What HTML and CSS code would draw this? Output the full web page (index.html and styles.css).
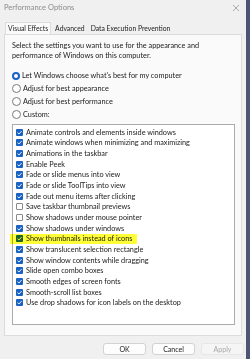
FILE: index.html
```html
<!DOCTYPE html>
<html lang="en">
<head>
    <meta charset="UTF-8">
    <title>Performance Options</title>
    <link rel="stylesheet" href="styles.css">
</head>
<body>
    <div class="window">
        <div class="titlebar">
            <span class="title">Performance Options</span>
            <svg class="close" width="8" height="8" viewBox="0 0 8 8">
                <path d="M1 1 L7 7 M7 1 L1 7" stroke="#9a9a9a" stroke-width="0.8" fill="none"/>
            </svg>
        </div>

        <div class="tabs">
            <div class="tab active">Visual Effects</div>
            <div class="tab">Advanced</div>
            <div class="tab">Data Execution Prevention</div>
        </div>

        <div class="panel">
            <p class="intro">Select the settings you want to use for the appearance and performance of Windows on this computer.</p>

            <div class="radios">
                <div class="radio-row"><span class="radio on"></span>Let Windows choose what's best for my computer</div>
                <div class="radio-row"><span class="radio"></span>Adjust for best appearance</div>
                <div class="radio-row"><span class="radio"></span>Adjust for best performance</div>
                <div class="radio-row"><span class="radio"></span>Custom:</div>
            </div>

            <div class="listbox">
                <div class="item"><span class="check on"></span>Animate controls and elements inside windows</div>
                <div class="item"><span class="check on"></span>Animate windows when minimizing and maximizing</div>
                <div class="item"><span class="check on"></span>Animations in the taskbar</div>
                <div class="item"><span class="check on"></span>Enable Peek</div>
                <div class="item"><span class="check on"></span>Fade or slide menus into view</div>
                <div class="item"><span class="check on"></span>Fade or slide ToolTips into view</div>
                <div class="item"><span class="check on"></span>Fade out menu items after clicking</div>
                <div class="item"><span class="check"></span>Save taskbar thumbnail previews</div>
                <div class="item"><span class="check"></span>Show shadows under mouse pointer</div>
                <div class="item"><span class="check on"></span>Show shadows under windows</div>
                <div class="item marked"><span class="check on"></span>Show thumbnails instead of icons</div>
                <div class="item"><span class="check on"></span>Show translucent selection rectangle</div>
                <div class="item"><span class="check on"></span>Show window contents while dragging</div>
                <div class="item"><span class="check on"></span>Slide open combo boxes</div>
                <div class="item"><span class="check on"></span>Smooth edges of screen fonts</div>
                <div class="item"><span class="check on"></span>Smooth-scroll list boxes</div>
                <div class="item"><span class="check on"></span>Use drop shadows for icon labels on the desktop</div>
            </div>
        </div>

        <div class="buttons">
            <button class="btn">OK</button>
            <button class="btn">Cancel</button>
            <button class="btn" disabled>Apply</button>
        </div>
    </div>
</body>
</html>
```

FILE: styles.css
```css
body{
    margin: 0;
    background-color: #4d5573;
    font-family: Lato, "Noto Sans", sans-serif;
    font-size: 7.3px;
    color: #1b1b1b;
}

.window{
    width: 246px;
    height: 359px;
    background-color: #f0f0f0;
    overflow: hidden;
}

.titlebar{
    height: 22px;
    display: flex;
    justify-content: space-between;
    align-items: flex-start;
    padding: 3px 6px 0 4px;
    box-sizing: border-box;
}

.title{
    color: #8c8c8c;
    font-size: 7.5px;
    line-height: 10px;
}

.close{
    margin-top: 1px;
}

.tabs{
    display: flex;
    height: 12px;
    margin-left: 5px;
    font-size: 6.8px;
}

.tab{
    padding: 0 3px;
    line-height: 12px;
    color: #222;
}

.tab.active{
    background-color: #fafafa;
    border: 1px solid #dcdcdc;
    border-bottom: none;
    line-height: 11px;
    padding: 0 2px;
    margin-right: 1px;
}

.panel{
    height: 302px;
    margin: 0 4px;
    background-color: #fafafa;
    border: 1px solid #dcdcdc;
    box-sizing: border-box;
    padding: 6px 6px 0 7px;
}

.intro{
    margin: 0;
    line-height: 9.5px;
    width: 200px;
}

.radios{
    margin-top: 9px;
}

.radio-row{
    display: flex;
    align-items: center;
    height: 13px;
}

.radio{
    width: 7px;
    height: 7px;
    border: 1px solid #7a7a7a;
    border-radius: 50%;
    margin-right: 2px;
    background-color: #fff;
}

.radio.on{
    border: 2.5px solid #1a62c4;
    width: 4px;
    height: 4px;
}

.listbox{
    position: relative;
    margin-top: 3px;
    height: 201px;
    width: 223px;
    background-color: #fff;
    border: 1px solid #ababab;
    box-sizing: border-box;
    padding: 2px 0 0 3px;
}

.item{
    position: relative;
    display: flex;
    align-items: center;
    height: 10.67px;
    white-space: nowrap;
}

.check{
    width: 7px;
    height: 7px;
    border: 1px solid #8a8a8a;
    border-radius: 1px;
    margin-right: 3px;
    box-sizing: border-box;
    background-color: #fff;
}

.check.on{
    border: none;
    background-color: #1a62c4;
    background-image: url("data:image/svg+xml,%3Csvg xmlns='http://www.w3.org/2000/svg' viewBox='0 0 7 7'%3E%3Cpath d='M1.5 3.7 L3 5 L5.6 2' stroke='white' stroke-width='0.9' fill='none'/%3E%3C/svg%3E");
}

.item.marked::after{
    content: "";
    position: absolute;
    left: -6px;
    top: 0;
    width: 127px;
    height: 10px;
    background-color: #ffff38;
    mix-blend-mode: multiply;
}

.buttons{
    display: flex;
    justify-content: flex-end;
    gap: 6px;
    margin: 7px 2px 0 0;
}

.btn{
    width: 43px;
    height: 12px;
    padding: 0;
    font-family: inherit;
    font-size: 7px;
    color: #1b1b1b;
    background-color: #fdfdfd;
    border: 1px solid #d2d2d2;
    border-radius: 3px;
}

.btn:disabled{
    color: #a8a8a8;
    background-color: #f5f5f5;
    border-color: #e6e6e6;
}
```
